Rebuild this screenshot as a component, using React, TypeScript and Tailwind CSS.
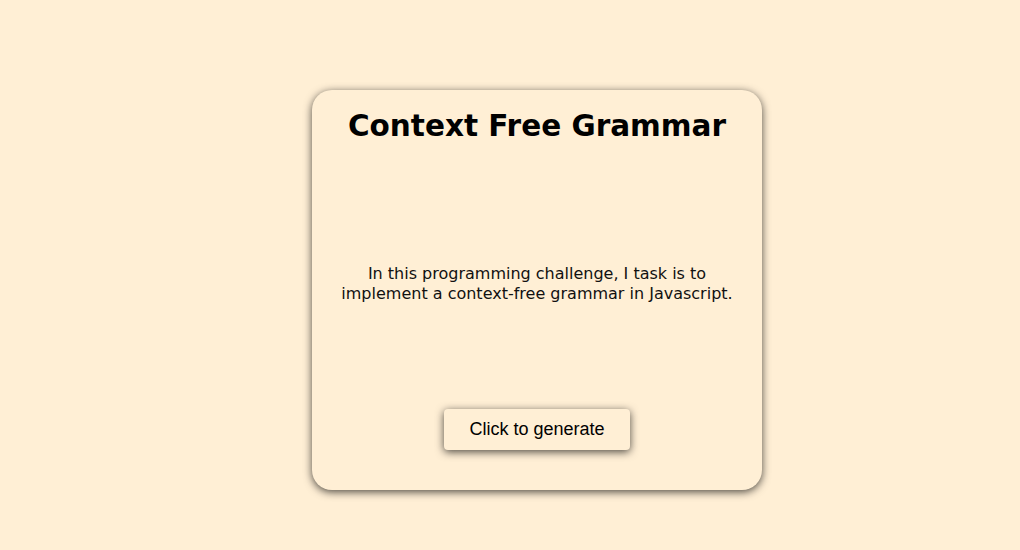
export default function App() {
  return (
    <div className="min-h-[550px] w-full bg-[#ffefd5] pt-[90px]">
      <div className="ml-[312px] flex h-[400px] w-[450px] flex-col items-center rounded-[20px] bg-[#ffefd5] px-6 pb-[40px] pt-[14px] shadow-[0_2px_9px_rgba(0,0,0,0.7)]">
        <h1 className="text-center font-['DejaVu_Sans',sans-serif] text-[29.5px] font-bold leading-[44px] text-black">
          Context Free Grammar
        </h1>
        <div className="flex flex-1 items-center justify-center pt-[10px]">
          <p className="text-center font-['DejaVu_Sans',sans-serif] text-[16px] leading-[20px] text-[#111]">
            In this programming challenge, I task is to
            <br />
            implement a context-free grammar in Javascript.
          </p>
        </div>
        <button className="h-[41px] w-[186px] rounded-[4px] bg-[#ffefd5] font-['Liberation_Sans',Arial,sans-serif] text-[18px] text-black shadow-[0_2px_9px_rgba(0,0,0,0.7)]">
          Click to generate
        </button>
      </div>
    </div>
  );
}
